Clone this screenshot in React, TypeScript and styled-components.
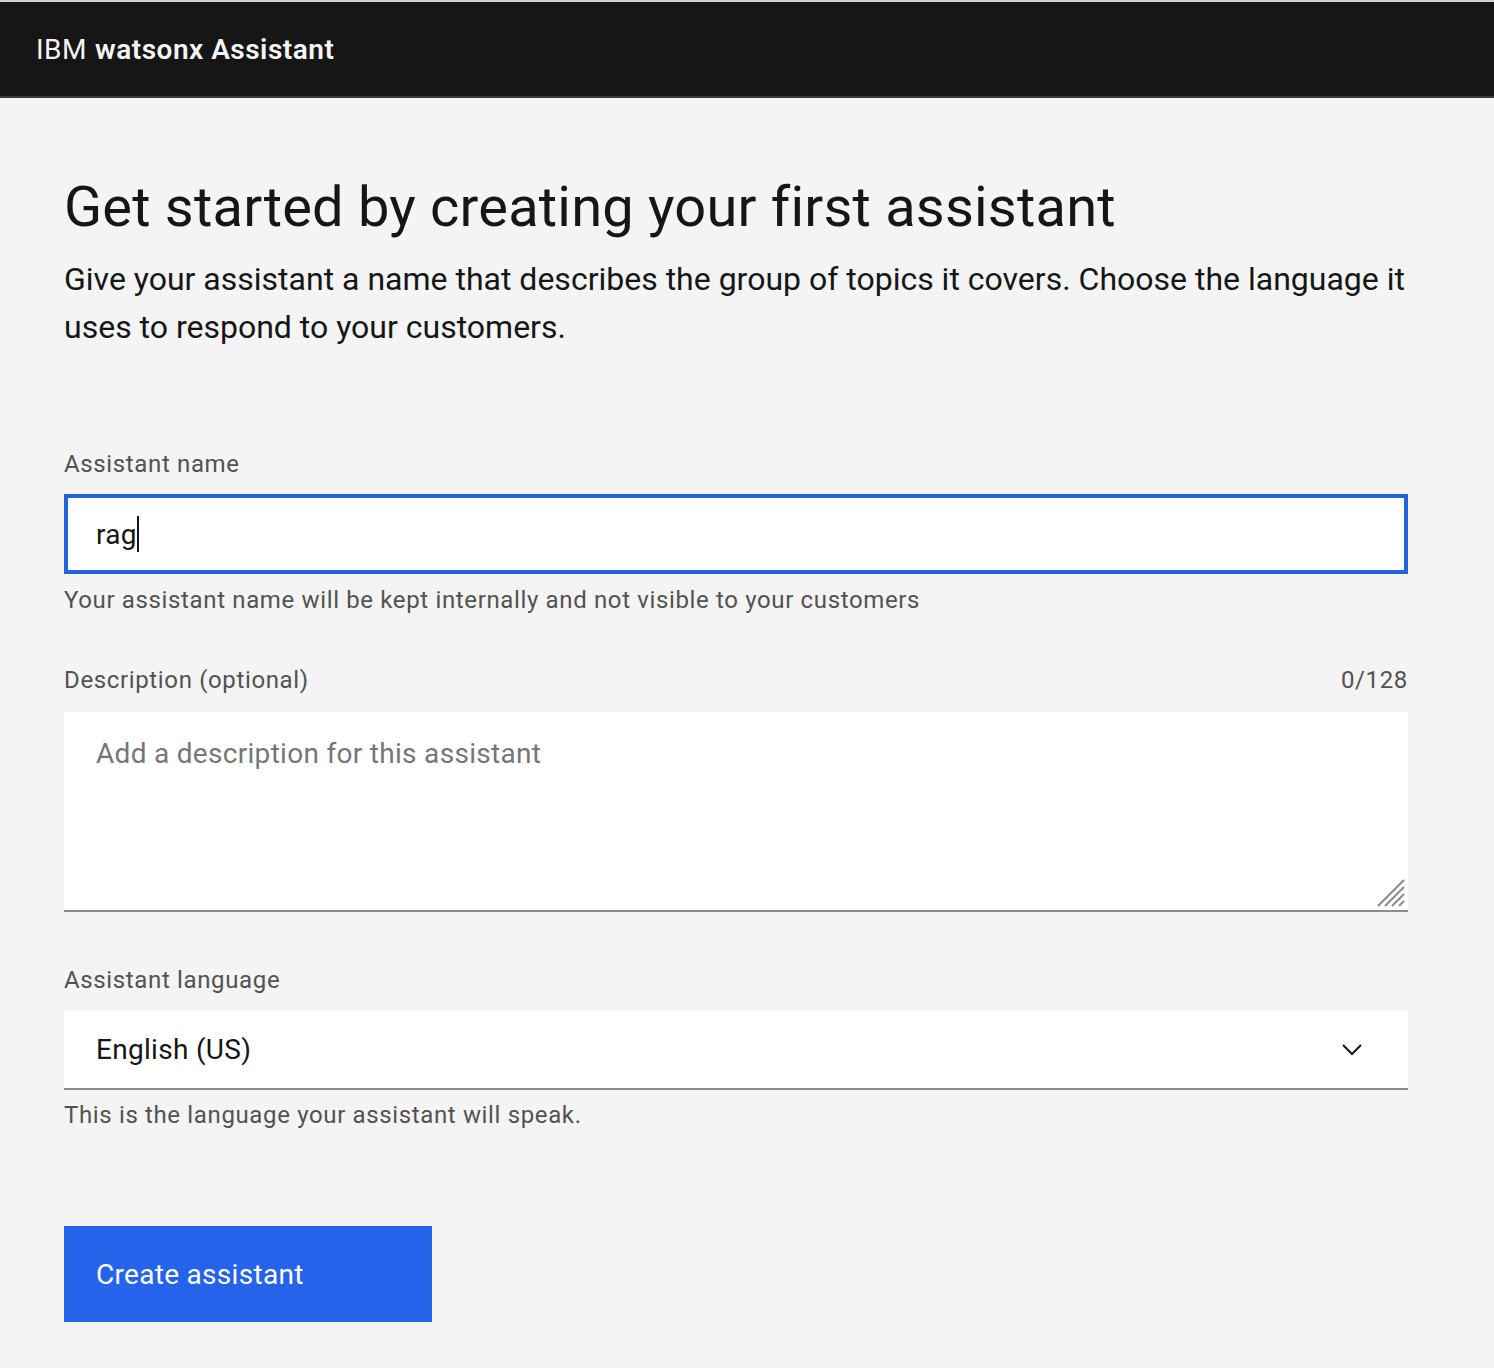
import React from "react"
import styled, { createGlobalStyle } from "styled-components"

const GlobalStyle = createGlobalStyle`
  html, body {
    margin: 0;
    padding: 0;
    background: #f4f4f4;
    font-family: Roboto, "Liberation Sans", sans-serif;
    color: #161616;
  }
  * {
    box-sizing: border-box;
  }
`

const Page = styled.div`
  min-height: 1368px;
  background: #f4f4f4;
`

const Header = styled.header`
  height: 98px;
  background: #161616;
  border-top: 2px solid #cfcfcf;
  border-bottom: 2px solid #393939;
  display: flex;
  align-items: center;
  padding-left: 36px;
  font-size: 28px;
  color: #f4f4f4;
  letter-spacing: 0.5px;
`

const Brand = styled.span`
  font-weight: 400;
  margin-right: 8px;
`

const Product = styled.span`
  font-weight: 600;
`

const Main = styled.main`
  padding: 73px 86px 46px 64px;
`

const Title = styled.h1`
  margin: 0;
  font-size: 56px;
  line-height: 72px;
  font-weight: 400;
  letter-spacing: 0.2px;
  color: #161616;
`

const Intro = styled.p`
  margin: 12px 0 0;
  font-size: 32px;
  line-height: 48px;
  color: #161616;
`

const Form = styled.div`
  margin-top: 97px;
  display: flex;
  flex-direction: column;
`

const Field = styled.div<{ $gap?: number }>`
  margin-top: ${(p) => p.$gap ?? 0}px;
  display: flex;
  flex-direction: column;
`

const LabelRow = styled.div<{ $space?: number }>`
  display: flex;
  justify-content: space-between;
  margin-bottom: ${(p) => p.$space ?? 16}px;
`

const Label = styled.label`
  font-size: 24px;
  line-height: 32px;
  letter-spacing: 0.64px;
  color: #525252;
`

const Helper = styled.div<{ $space?: number }>`
  margin-top: ${(p) => p.$space ?? 8}px;
  font-size: 24px;
  line-height: 32px;
  letter-spacing: 0.64px;
  color: #525252;
`

const TextInput = styled.div`
  height: 80px;
  background: #ffffff;
  border: 4px solid #2462dc;
  padding: 0 28px;
  display: flex;
  align-items: center;
  font-size: 28px;
  letter-spacing: 0.3px;
  color: #161616;
`

const Caret = styled.span`
  display: inline-block;
  width: 2px;
  height: 36px;
  background: #161616;
  margin-left: 0;
`

const AreaWrap = styled.div`
  position: relative;
`

const TextArea = styled.textarea`
  height: 200px;
  width: 100%;
  background: #ffffff;
  border: none;
  border-bottom: 2px solid #8d8d8d;
  padding: 18px 32px;
  font-family: Roboto, "Liberation Sans", sans-serif;
  font-size: 28px;
  line-height: 48px;
  letter-spacing: 0.3px;
  color: #161616;
  outline: none;
  resize: none;
  display: block;
  &::placeholder {
    color: #767676;
  }
`

const Grip = styled.svg`
  position: absolute;
  right: 2px;
  bottom: 4px;
  width: 30px;
  height: 30px;
  pointer-events: none;
`

const Select = styled.div`
  height: 80px;
  background: #ffffff;
  border-bottom: 2px solid #8d8d8d;
  padding: 0 44px 0 32px;
  display: flex;
  align-items: center;
  justify-content: space-between;
  font-size: 28px;
  letter-spacing: 0.3px;
  color: #161616;
`

const Chevron = styled.svg`
  width: 24px;
  height: 24px;
`

const Button = styled.button`
  margin-top: 95px;
  width: 368px;
  height: 96px;
  background: #2563eb;
  border: none;
  padding: 0 32px;
  text-align: left;
  font-family: Roboto, "Liberation Sans", sans-serif;
  font-size: 28px;
  letter-spacing: 0.3px;
  color: #ffffff;
  cursor: pointer;
`

export default function App() {
  return (
    <Page>
      <GlobalStyle />
      <Header>
        <Brand>IBM</Brand>
        <Product>watsonx Assistant</Product>
      </Header>
      <Main>
        <Title>Get started by creating your first assistant</Title>
        <Intro>
          Give your assistant a name that describes the group of topics it covers. Choose the language it
          uses to respond to your customers.
        </Intro>
        <Form>
          <Field>
            <LabelRow $space={14}>
              <Label>Assistant name</Label>
            </LabelRow>
            <TextInput>
              rag
              <Caret />
            </TextInput>
            <Helper $space={10}>Your assistant name will be kept internally and not visible to your customers</Helper>
          </Field>
          <Field $gap={48}>
            <LabelRow>
              <Label>Description (optional)</Label>
              <Label>0/128</Label>
            </LabelRow>
            <AreaWrap>
              <TextArea placeholder="Add a description for this assistant" />
              <Grip viewBox="0 0 30 30" stroke="#8d8d8d" strokeWidth="2.2">
                <line x1="2" y1="28" x2="28" y2="2" />
                <line x1="9" y1="28" x2="28" y2="9" />
                <line x1="16" y1="28" x2="28" y2="16" />
                <line x1="23" y1="28" x2="28" y2="23" />
              </Grip>
            </AreaWrap>
          </Field>
          <Field $gap={52}>
            <LabelRow $space={14}>
              <Label>Assistant language</Label>
            </LabelRow>
            <Select>
              English (US)
              <Chevron viewBox="0 0 24 24" fill="none" stroke="#161616" strokeWidth="2">
                <polyline points="3,8 12,17 21,8" />
              </Chevron>
            </Select>
            <Helper $space={9}>This is the language your assistant will speak.</Helper>
          </Field>
        </Form>
        <Button>Create assistant</Button>
      </Main>
    </Page>
  )
}
